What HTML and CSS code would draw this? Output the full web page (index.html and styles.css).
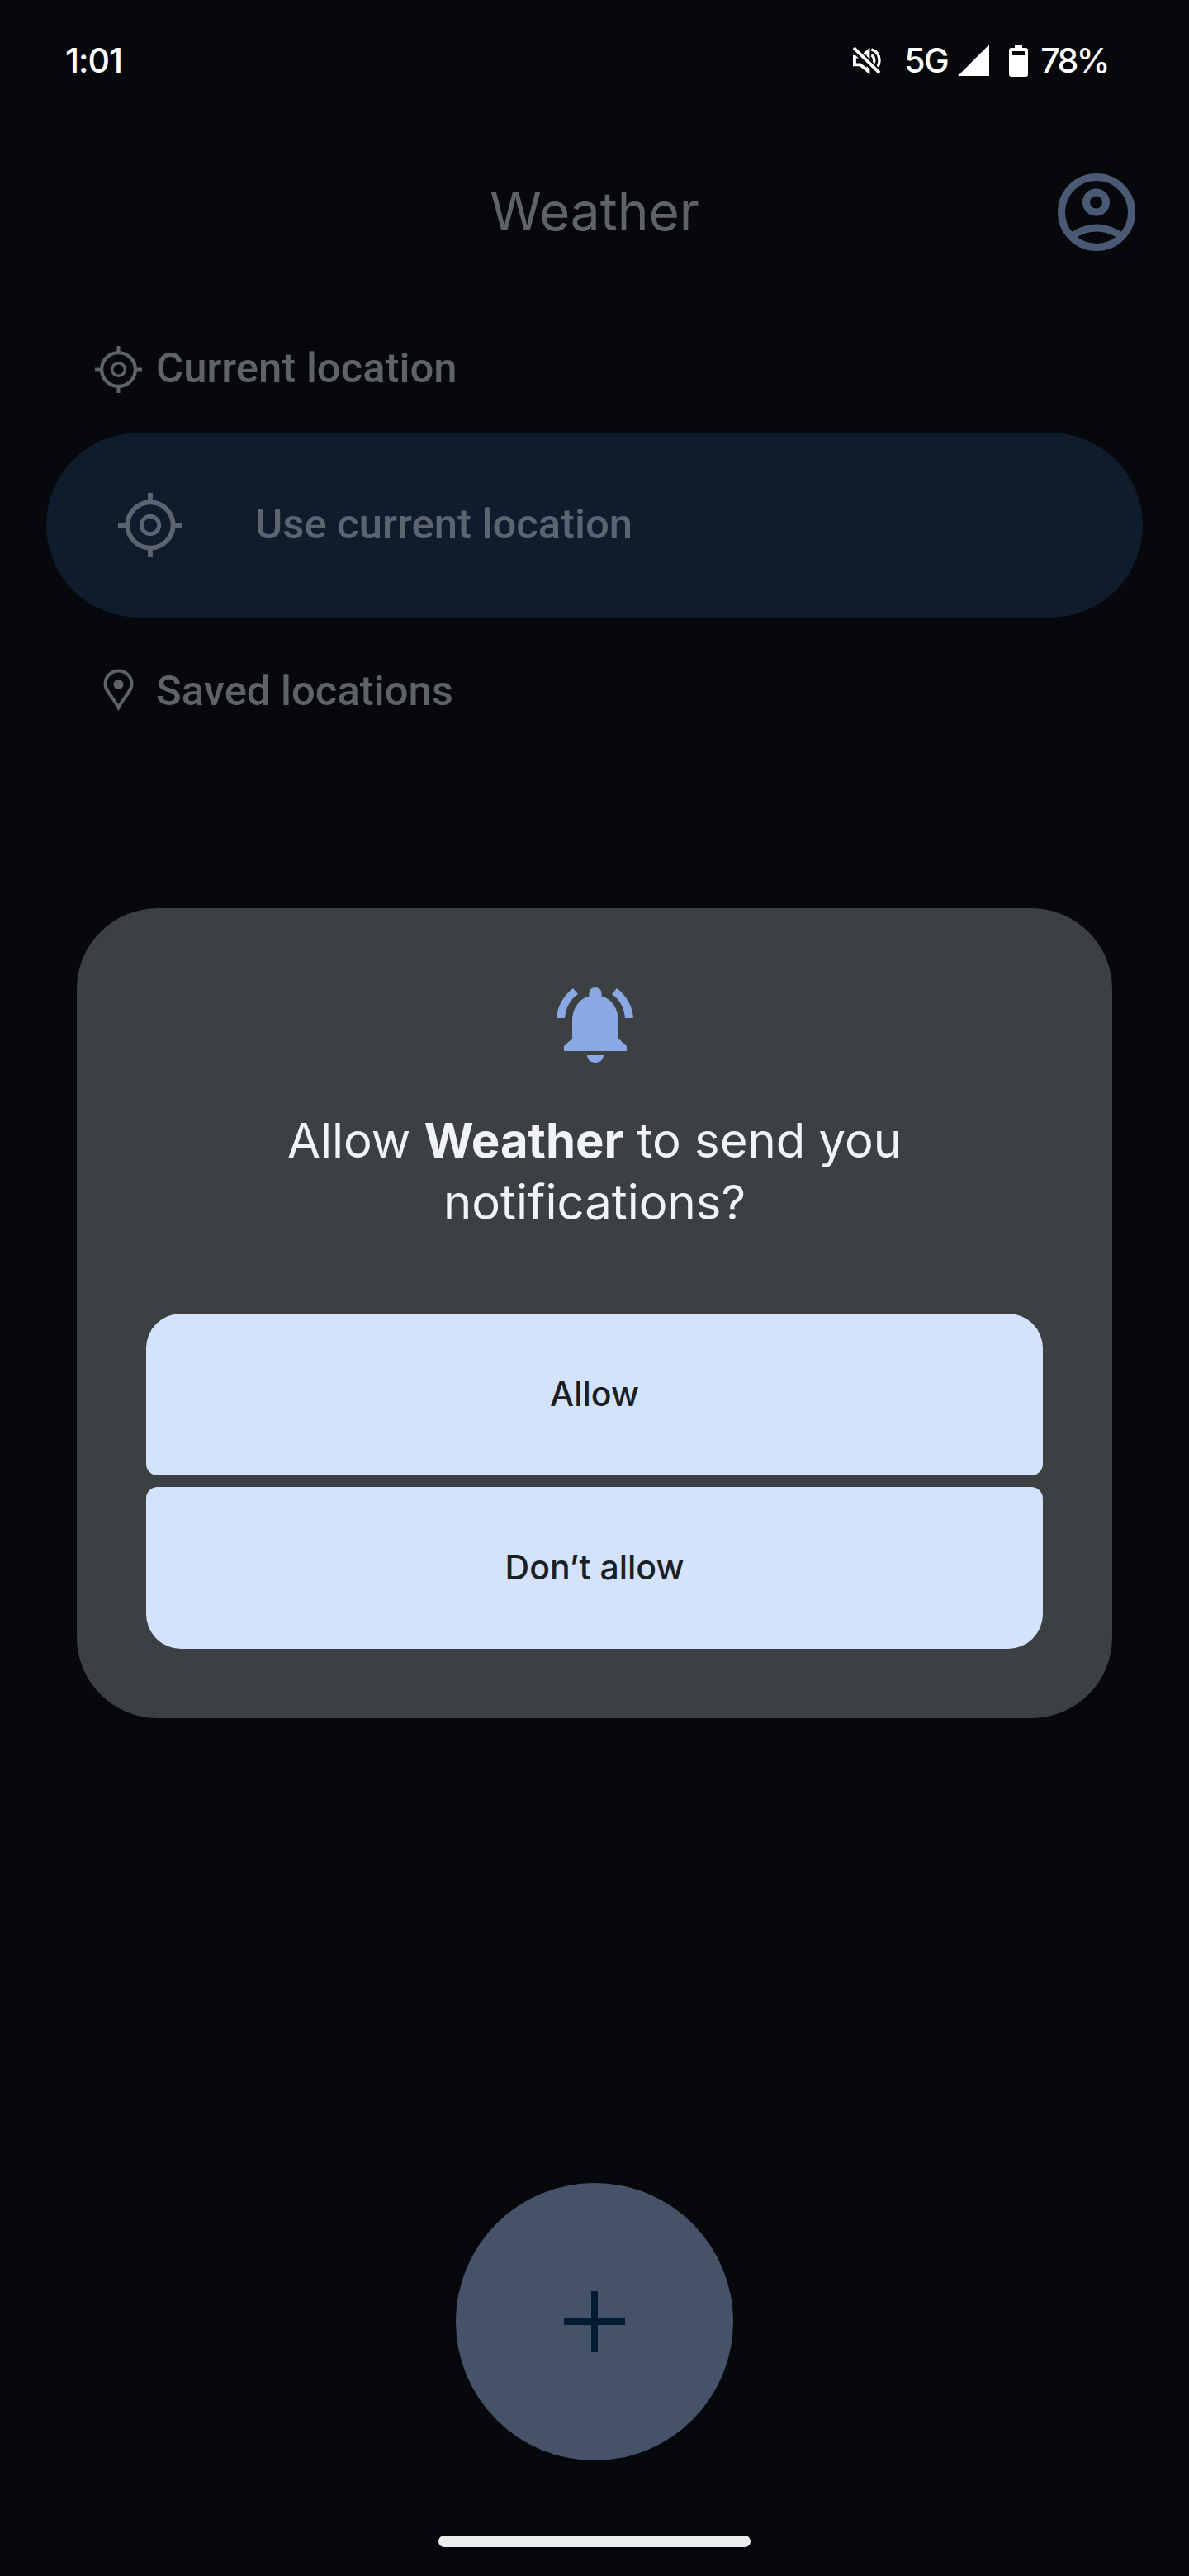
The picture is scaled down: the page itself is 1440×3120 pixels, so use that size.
FILE: index.html
```html
<!DOCTYPE html>
<html lang="en">
<head>
  <meta charset="UTF-8">
  <meta name="viewport" content="width=device-width, initial-scale=1.0">
  <title>Weather</title>
  <link rel="stylesheet" href="styles.css">
</head>
<body>

  <div class="screen">
    <!-- Status bar -->
    <div class="status-bar">
      <span class="status-time">1:01</span>
      <div class="status-right">
        <svg class="icon-mute" viewBox="0 0 36 34">
          <path d="M11 12H3v10h7l10 8V5l-6 5" fill="none" stroke="#fff" stroke-width="4"/>
          <path d="M24 3c6 2 10 7 10 14 0 3-1 6-2.500 8M24 10c2 1 3.500 4 3.500 7 0 1-.3 2-.7 3" fill="none" stroke="#fff" stroke-width="3.500"/>
          <path d="M2 2 34 33" fill="none" stroke="#06080b" stroke-width="9"/>
          <path d="M2 1 34 32" fill="none" stroke="#fff" stroke-width="4"/>
        </svg>
        <span class="status-net">5G</span>
        <svg class="icon-signal" viewBox="0 0 38 38"><path d="M38 0V38H0Z" fill="#fff"/></svg>
        <svg class="icon-battery" viewBox="0 0 23 39">
          <path d="M7 0h9v4h4a3 3 0 0 1 3 3v29a3 3 0 0 1-3 3H3a3 3 0 0 1-3-3V7a3 3 0 0 1 3-3h4ZM4 8v5h15V8Z" fill="#fff" fill-rule="evenodd"/>
        </svg>
        <span class="status-battery">78%</span>
      </div>
    </div>

    <!-- Header -->
    <div class="header">
      <h1>Weather</h1>
      <svg class="icon-profile" viewBox="0 0 94 94">
        <circle cx="47" cy="47" r="42.500" fill="none" stroke="#4a5a74" stroke-width="9"/>
        <circle cx="46.500" cy="35" r="12" fill="none" stroke="#4a5a74" stroke-width="9"/>
        <path d="M20 74Q47 58 74 74" fill="none" stroke="#4a5a74" stroke-width="9"/>
      </svg>
    </div>

    <div class="section-label section-current">
      <svg class="icon-small" viewBox="0 0 24 24">
        <circle cx="12" cy="12" r="8.600" fill="none" stroke="#5f6266" stroke-width="1.800"/>
        <circle cx="12" cy="12" r="3.300" fill="none" stroke="#5f6266" stroke-width="1.500"/>
        <path d="M12 0v3M12 21v3M0 12h3M21 12h3" stroke="#5f6266" stroke-width="1.700"/>
      </svg>
      <span class="label-text">Current location</span>
    </div>

    <div class="location-pill">
      <svg class="icon-target" viewBox="0 0 24 24">
        <circle cx="12" cy="12" r="8.500" fill="none" stroke="#5c6470" stroke-width="1.800"/>
        <circle cx="12" cy="12" r="3.300" fill="none" stroke="#5c6470" stroke-width="1.500"/>
        <path d="M12 0v3M12 21v3M0 12h3M21 12h3" stroke="#5c6470" stroke-width="1.800"/>
      </svg>
      <span class="label-text">Use current location</span>
    </div>

    <div class="section-label section-saved">
      <span class="pin-slot">
        <svg class="icon-pin" viewBox="0 0 37 52">
          <path d="M18.500 2.500C9.500 2.500 2.500 9.500 2.500 18.500 2.500 27 11 33 18.500 47 26 33 34.500 27 34.500 18.500 34.500 9.500 27.500 2.500 18.500 2.500Z" fill="none" stroke="#5f6266" stroke-width="4"/>
          <circle cx="18.500" cy="19" r="6" fill="#5f6266"/>
        </svg>
      </span>
      <span>Saved locations</span>
    </div>

    <!-- Add button and nav handle -->
    <div class="fab">
      <svg class="icon-plus" viewBox="0 0 74 74"><path d="M33 0h8v33h33v8H41v33h-8V41H0v-8h33Z" fill="#031a33"/></svg>
    </div>
    <div class="home-bar"></div>

    <!-- Permission dialog -->
    <div class="dialog">
      <svg class="icon-bell" viewBox="0 0 93 92">
        <path d="M47 1c-4.500 0-7.500 3-7.500 7v3.500C26 15 19 28 19 43v20l-10 9v6h76v-6l-10-9V43c0-15-7-28-20.500-31.500V8c0-4-3-7-7.500-7Z" fill="#8aa8e3"/>
        <path d="M37 83h20c0 5-4 9-10 9s-10-4-10-9Z" fill="#8aa8e3"/>
        <path d="M0 38C1 24 8 11 20 2l6 7C16 16 11 26 10 38ZM93 38C92 24 85 11 73 2l-6 7C77 16 82 26 83 38Z" fill="#8aa8e3"/>
      </svg>
      <p class="dialog-text">Allow <strong>Weather</strong> to send you<br>notifications?</p>
      <div class="dialog-buttons">
        <button class="btn-top" type="button">Allow</button>
        <button class="btn-bottom" type="button">Don’t allow</button>
      </div>
    </div>
  </div>

</body>
</html>
```

FILE: styles.css
```css
* {
  margin: 0;
  padding: 0;
  box-sizing: border-box;
}

body {
  font-family: Inter, "Liberation Sans", sans-serif;
  background-color: #06080b;
}

.screen {
  position: relative;
  display: flex;
  flex-direction: column;
  width: 1440px;
  height: 3120px;
  overflow: hidden;
  background-color: #06080b;
}

.status-bar {
  display: flex;
  justify-content: space-between;
  align-items: center;
  height: 40px;
  margin-top: 53px;
  padding: 0 98px 0 79px;
  color: #fff;
  font-size: 41px;
  font-weight: 500;
  line-height: 40px;
}

.status-time {
  letter-spacing: -1px;
}

.status-net {
  letter-spacing: -1.500px;
}

.status-battery {
  letter-spacing: -2.500px;
}

.status-right {
  display: flex;
  align-items: center;
}

.icon-mute {
  width: 35px;
  height: 33px;
  margin-right: 28px;
}

.icon-signal {
  width: 38px;
  height: 38px;
  margin-left: 12px;
}

.icon-battery {
  width: 23px;
  height: 39px;
  margin-left: 24px;
  margin-right: 15px;
}

.header {
  position: relative;
  display: flex;
  justify-content: center;
  align-items: center;
  height: 94px;
  margin-top: 117px;
}

h1 {
  margin-top: -4px;
  font-size: 64px;
  font-weight: 400;
  color: #5f6266;
}

.icon-profile {
  position: absolute;
  left: 1281px;
  top: 0;
  width: 94px;
  height: 94px;
}

.section-label {
  display: flex;
  align-items: center;
  gap: 17px;
  padding-left: 115px;
  font-family: Roboto, sans-serif;
  font-size: 50.800px;
  font-weight: 500;
  color: #5f6266;
}

.label-text {
  margin-top: -3px;
}

.section-current {
  height: 58px;
  margin-top: 114px;
}

.icon-small {
  width: 57px;
  height: 57px;
}

.location-pill {
  display: flex;
  align-items: center;
  gap: 88px;
  height: 224px;
  margin: 48px 56px 0;
  padding-left: 87px;
  border-radius: 112px;
  background-color: #0f1c2e;
  font-family: Roboto, sans-serif;
  font-size: 50.800px;
  font-weight: 500;
  color: #5c6470;
}

.icon-target {
  width: 78px;
  height: 78px;
}

.section-saved {
  height: 58px;
  margin-top: 59px;
}

.pin-slot {
  display: flex;
  justify-content: center;
  width: 57px;
}

.icon-pin {
  width: 37px;
  height: 52px;
}

.fab {
  display: flex;
  justify-content: center;
  align-items: center;
  width: 336px;
  height: 336px;
  margin: auto auto 0;
  border-radius: 50%;
  background-color: #455268;
}

.icon-plus {
  width: 74px;
  height: 74px;
}

.home-bar {
  width: 378px;
  height: 14px;
  margin: 91px auto 35px;
  border-radius: 7px;
  background-color: #ececec;
}

.dialog {
  position: absolute;
  left: 93px;
  top: 1100px;
  width: 1254px;
  height: 981px;
  padding: 95px 84px 0;
  border-radius: 98px;
  background-color: #3d4043;
  text-align: center;
}

.icon-bell {
  display: block;
  width: 93px;
  height: 92px;
  margin: 0 auto;
}

.dialog-text {
  margin-top: 57px;
  font-size: 58px;
  line-height: 75px;
  color: #f1f3f7;
}

.dialog-text strong {
  font-weight: 700;
}

.dialog-buttons {
  display: flex;
  flex-direction: column;
  gap: 14px;
  margin-top: 97px;
}

button {
  width: 100%;
  height: 196px;
  padding-bottom: 2px;
  border: none;
  background-color: #d3e3fd;
  color: #1b1f24;
  font-family: Inter, sans-serif;
  font-size: 41px;
  font-weight: 500;
}

.btn-top {
  border-radius: 42px 42px 14px 14px;
}

.btn-bottom {
  border-radius: 14px 14px 42px 42px;
}
```
